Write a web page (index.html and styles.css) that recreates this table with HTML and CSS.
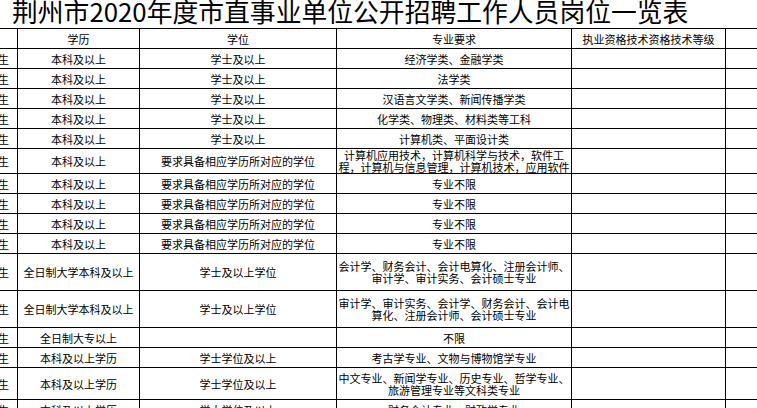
FILE: index.html
```html
<!DOCTYPE html>
<html lang="zh-CN">
<head>
<meta charset="utf-8">
<title>荆州市2020年度市直事业单位公开招聘工作人员岗位一览表</title>
<link rel="stylesheet" href="styles.css">
</head>
<body>
<div class="page">
  <div class="title">荆州市2020年度市直事业单位公开招聘工作人员岗位一览表</div>
  <div class="sheet">
    <div class="row h20">
      <div class="c c0"></div>
      <div class="c">学历</div>
      <div class="c">学位</div>
      <div class="c">专业要求</div>
      <div class="c">执业资格技术资格技术等级</div>
      <div class="c"></div>
    </div>
    <div class="row h20">
      <div class="c c0">毕业生</div>
      <div class="c">本科及以上</div>
      <div class="c">学士及以上</div>
      <div class="c">经济学类、金融学类</div>
      <div class="c"></div>
      <div class="c"></div>
    </div>
    <div class="row h20">
      <div class="c c0">毕业生</div>
      <div class="c">本科及以上</div>
      <div class="c">学士及以上</div>
      <div class="c">法学类</div>
      <div class="c"></div>
      <div class="c"></div>
    </div>
    <div class="row h20">
      <div class="c c0">毕业生</div>
      <div class="c">本科及以上</div>
      <div class="c">学士及以上</div>
      <div class="c">汉语言文学类、新闻传播学类</div>
      <div class="c"></div>
      <div class="c"></div>
    </div>
    <div class="row h20">
      <div class="c c0">毕业生</div>
      <div class="c">本科及以上</div>
      <div class="c">学士及以上</div>
      <div class="c">化学类、物理类、材料类等工科</div>
      <div class="c"></div>
      <div class="c"></div>
    </div>
    <div class="row h20">
      <div class="c c0">毕业生</div>
      <div class="c">本科及以上</div>
      <div class="c">学士及以上</div>
      <div class="c">计算机类、平面设计类</div>
      <div class="c"></div>
      <div class="c"></div>
    </div>
    <div class="row h25">
      <div class="c c0">毕业生</div>
      <div class="c">本科及以上</div>
      <div class="c">要求具备相应学历所对应的学位</div>
      <div class="c multi top">计算机应用技术，计算机科学与技术，软件工程，计算机与信息管理，计算机技术，应用软件</div>
      <div class="c"></div>
      <div class="c"></div>
    </div>
    <div class="row h20">
      <div class="c c0">毕业生</div>
      <div class="c">本科及以上</div>
      <div class="c">要求具备相应学历所对应的学位</div>
      <div class="c">专业不限</div>
      <div class="c"></div>
      <div class="c"></div>
    </div>
    <div class="row h20">
      <div class="c c0">毕业生</div>
      <div class="c">本科及以上</div>
      <div class="c">要求具备相应学历所对应的学位</div>
      <div class="c">专业不限</div>
      <div class="c"></div>
      <div class="c"></div>
    </div>
    <div class="row h20">
      <div class="c c0">毕业生</div>
      <div class="c">本科及以上</div>
      <div class="c">要求具备相应学历所对应的学位</div>
      <div class="c">专业不限</div>
      <div class="c"></div>
      <div class="c"></div>
    </div>
    <div class="row h20">
      <div class="c c0">毕业生</div>
      <div class="c">本科及以上</div>
      <div class="c">要求具备相应学历所对应的学位</div>
      <div class="c">专业不限</div>
      <div class="c"></div>
      <div class="c"></div>
    </div>
    <div class="row h37">
      <div class="c c0">毕业生</div>
      <div class="c">全日制大学本科及以上</div>
      <div class="c">学士及以上学位</div>
      <div class="c multi">会计学、财务会计、会计电算化、注册会计师、审计学、审计实务、会计硕士专业</div>
      <div class="c"></div>
      <div class="c"></div>
    </div>
    <div class="row h37">
      <div class="c c0">毕业生</div>
      <div class="c">全日制大学本科及以上</div>
      <div class="c">学士及以上学位</div>
      <div class="c multi">审计学、审计实务、会计学、财务会计、会计电算化、注册会计师、会计硕士专业</div>
      <div class="c"></div>
      <div class="c"></div>
    </div>
    <div class="row h20">
      <div class="c c0">毕业生</div>
      <div class="c">全日制大专以上</div>
      <div class="c"></div>
      <div class="c">不限</div>
      <div class="c"></div>
      <div class="c"></div>
    </div>
    <div class="row h20">
      <div class="c c0">毕业生</div>
      <div class="c">本科及以上学历</div>
      <div class="c">学士学位及以上</div>
      <div class="c">考古学专业、文物与博物馆学专业</div>
      <div class="c"></div>
      <div class="c"></div>
    </div>
    <div class="row h32">
      <div class="c c0">毕业生</div>
      <div class="c">本科及以上学历</div>
      <div class="c">学士学位及以上</div>
      <div class="c multi">中文专业、新闻学专业、历史专业、哲学专业、旅游管理专业等文科类专业</div>
      <div class="c"></div>
      <div class="c"></div>
    </div>
    <div class="row h20">
      <div class="c c0">毕业生</div>
      <div class="c">本科及以上学历</div>
      <div class="c">学士学位及以上</div>
      <div class="c">财务会计专业、财政学专业</div>
      <div class="c"></div>
      <div class="c"></div>
    </div>
  </div>
</div>
</body>
</html>
```
FILE: styles.css
```css
html, body {
  margin: 0;
  padding: 0;
  background: #ffffff;
}
body {
  overflow: hidden;
  width: 757px;
  height: 408px;
  font-family: "Noto Sans CJK SC", "Noto Sans", sans-serif;
  color: #000000;
}
.page {
  width: 757px;
  height: 408px;
  overflow: hidden;
}
.title {
  height: 28px;
  padding-left: 12px;
  font-size: 25.8px;
  line-height: 21px;
  white-space: nowrap;
  color: #000000;
}
.sheet {
  width: 808px;
  margin-left: -22px;
  border-top: 1px solid #000000;
  font-size: 11px;
}
.row {
  display: grid;
  grid-template-columns: 40px 122px 197px 235px 154px 60px;
}
.h20 { height: 20px; }
.h25 { height: 25px; }
.h32 { height: 32px; }
.h37 { height: 37px; }
.c {
  box-sizing: border-box;
  border-right: 1px solid #000000;
  border-bottom: 1px solid #000000;
  display: flex;
  align-items: center;
  justify-content: center;
  text-align: center;
  white-space: nowrap;
  overflow: hidden;
  padding: 0 1px;
}
.c0 {
  justify-content: flex-end;
  padding-right: 8px;
}
.multi {
  white-space: normal;
  line-height: 12px;
}
.top {
  align-items: flex-start;
  padding-top: 1px;
  line-height: 11.5px;
}
```
